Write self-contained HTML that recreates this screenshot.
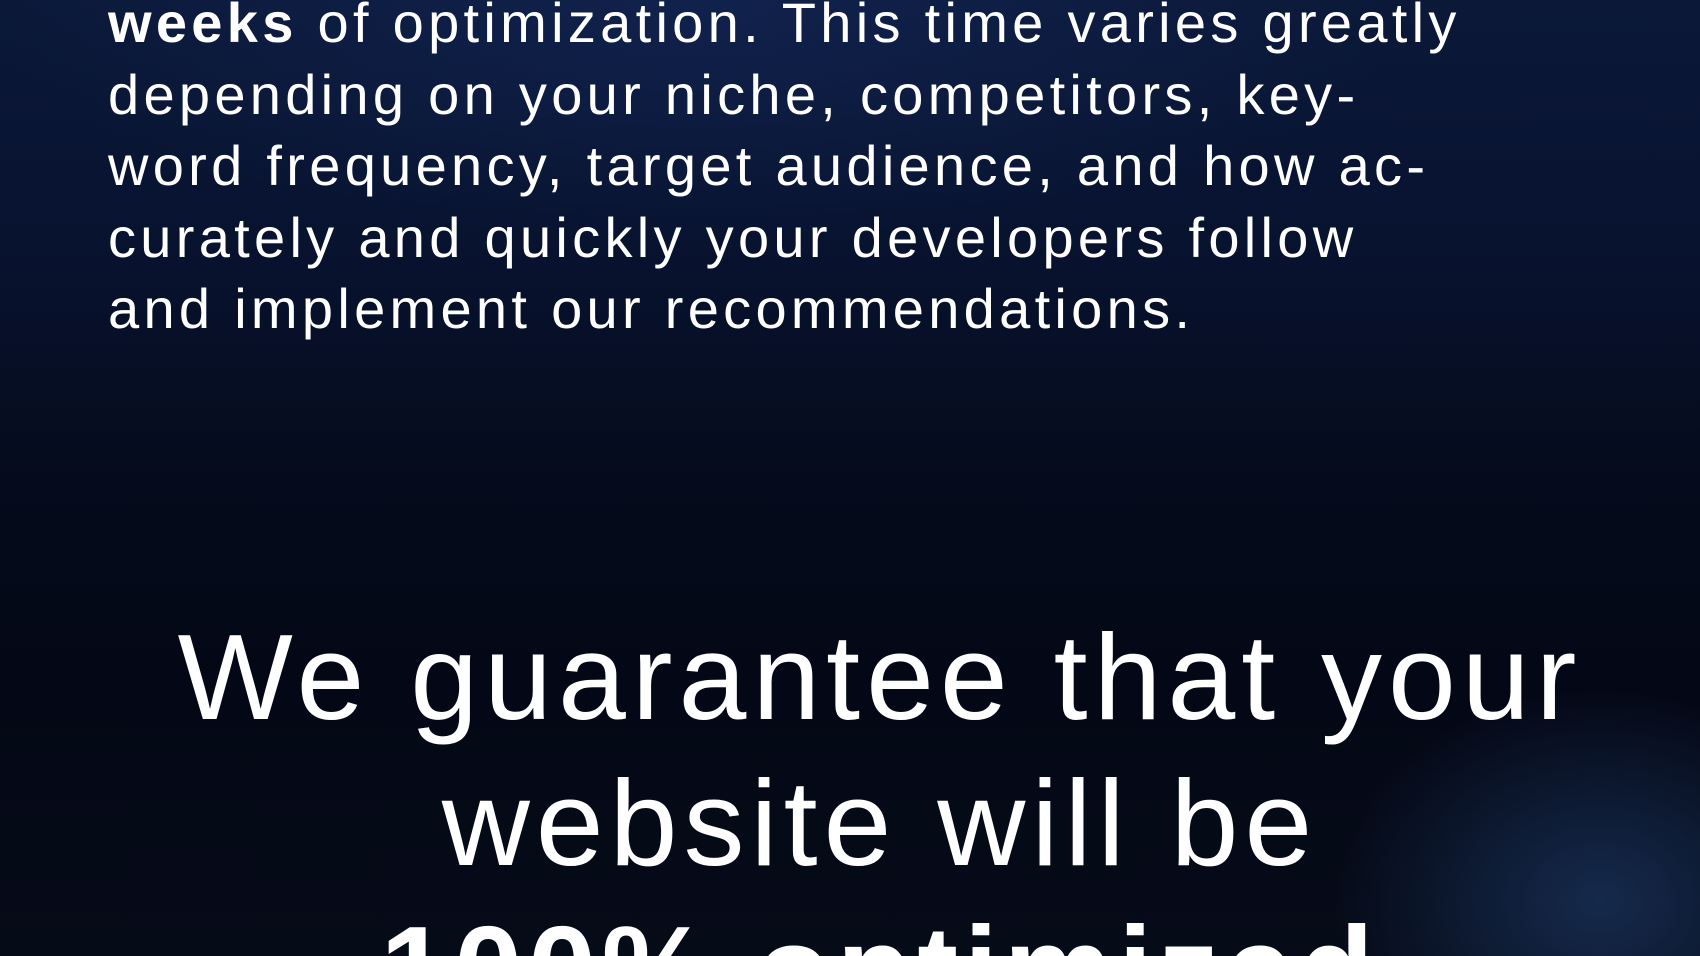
<!DOCTYPE html>
<html><head><meta charset="utf-8"><style>
html,body{margin:0;padding:0;width:1700px;height:956px;overflow:hidden;}
body{background:
radial-gradient(ellipse 380px 300px at 1600px 900px, rgba(40,80,140,0.45), rgba(0,0,0,0) 70%),
radial-gradient(ellipse 900px 300px at 700px 0px, rgba(20,40,90,0.6), rgba(0,0,0,0) 80%),
linear-gradient(180deg,#0b1838 0%,#081330 25%,#050b1c 50%,#040816 70%,#060b18 100%);
font-family:"Liberation Sans",sans-serif;color:#fff;position:relative;}
.wrap{position:absolute;left:0;top:0;width:1700px;height:956px;overflow:hidden;}
.p{position:absolute;left:108px;top:-13px;font-size:56px;line-height:71.5px;letter-spacing:4.3px;white-space:nowrap;}
.h{position:absolute;left:0;width:1700px;text-align:center;top:604px;font-size:122px;line-height:146px;letter-spacing:6px;white-space:nowrap;padding-left:60px;box-sizing:border-box;}
b{font-weight:bold;}
</style></head><body><div class="wrap">
<div class="p"><b>weeks</b> of optimization. This time varies greatly<br>depending on your niche, competitors, key-<br>word frequency, target audience, and how ac-<br>curately and quickly your developers follow<br>and implement our recommendations.</div>
<div class="h">We guarantee that your<br>website will be<br><b>100% optimized</b></div>
</div></body></html>
